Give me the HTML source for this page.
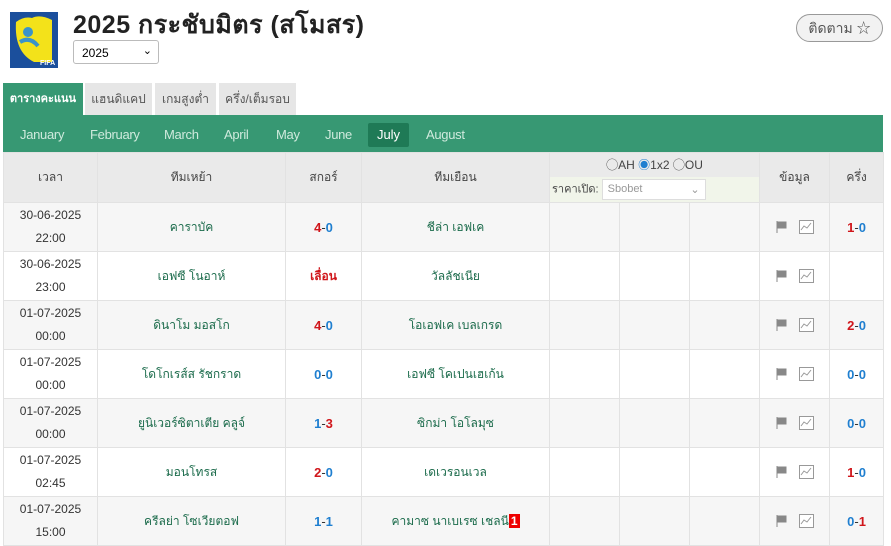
<!DOCTYPE html>
<html><head><meta charset="utf-8"><style>
*{margin:0;padding:0;box-sizing:border-box}
body{width:891px;height:546px;overflow:hidden;background:#fff;font-family:"Liberation Sans","Noto Sans CJK SC",sans-serif;font-size:12px;color:#333;position:relative}
.abs{position:absolute}
h1{position:absolute;left:73px;top:5px;font-size:25px;font-weight:bold;color:#222;letter-spacing:0.5px;font-family:"Liberation Sans","Noto Sans CJK SC",sans-serif}
.sel{left:73px;top:40px;width:86px;height:24px;border:1px solid #bbb;border-radius:3px;padding:5px 8px;font-size:12px;color:#000}
.follow{left:796px;top:14px;width:87px;height:28px;border:1px solid #999;border-radius:14px;background:#f2f2f2;color:#555;font-size:14px;text-align:center;line-height:26px}
.tab{top:83px;height:32px;background:#e6e6e6;color:#555;font-size:12px;text-align:center;line-height:32px}
.bar{left:3px;top:115px;width:880px;height:37px;background:#379873}
.m{top:123px;height:24px;line-height:24px;color:#cfeadd;font-size:13px;position:absolute;letter-spacing:-0.3px}
table{position:absolute;left:3px;top:152px;border-collapse:collapse;width:880px;table-layout:fixed}
td,th{border:1px solid #e2e2e2;text-align:center;font-weight:normal}
th{background:#eaeaea;height:50px;color:#444;font-size:12px}
td{height:49px;font-size:12px;line-height:23px}
tr.g td{background:#f6f6f6}
.t{color:#1b6b4b}
.r{color:#d0161b;font-weight:bold}.b{color:#1f7fd0;font-weight:bold}
.sc{font-size:13px}
.fl{display:inline-block;width:11px;height:12px;vertical-align:middle;margin-right:12px}
.ch{display:inline-block;width:15px;height:14px;vertical-align:middle}
</style></head><body>
<svg class="abs" style="left:10px;top:12px" width="48" height="56" viewBox="0 0 48 56">
<rect width="48" height="56" fill="#1b4f9c"/>
<path d="M6 10 Q4 40 24 50 L42 50 L42 8 Q30 2 22 6 Q14 4 6 10Z" fill="#f3e21a"/>
<circle cx="18" cy="20" r="5" fill="#3a93c9"/><path d="M10 30 Q20 24 28 34" stroke="#3a93c9" stroke-width="4" fill="none"/>
<text x="30" y="53" font-size="7" fill="#fff" font-weight="bold" font-family="Liberation Sans">FIFA</text>
</svg>
<h1>2025 กระชับมิตร (สโมสร)</h1>
<div class="abs sel">2025<span style="position:absolute;right:6px;top:3px;font-size:11px">&#8964;</span></div>
<div class="abs follow">ติดตาม ☆</div>
<div class="abs tab" style="left:3px;width:80px;background:#379873;color:#fff;font-weight:bold;font-size:11px">ตารางคะแนน</div>
<div class="abs tab" style="left:85px;width:67px">แฮนดิแคป</div>
<div class="abs tab" style="left:155px;width:61px">เกมสูงต่ำ</div>
<div class="abs tab" style="left:219px;width:77px">ครึ่ง/เต็มรอบ</div>
<div class="abs bar"></div>
<span class="m" style="left:20px">January</span>
<span class="m" style="left:90px">February</span>
<span class="m" style="left:164px">March</span>
<span class="m" style="left:224px">April</span>
<span class="m" style="left:276px">May</span>
<span class="m" style="left:325px">June</span>
<div class="abs" style="left:368px;top:123px;width:41px;height:24px;background:#1f7a56;border-radius:2px;color:#fff;font-size:13px;text-align:center;line-height:24px">July</div>
<span class="m" style="left:426px">August</span>
<table>
<colgroup><col style="width:94px"><col style="width:188px"><col style="width:76px"><col style="width:188px"><col style="width:70px"><col style="width:70px"><col style="width:70px"><col style="width:70px"><col style="width:54px"></colgroup>
<tr><th>เวลา</th><th>ทีมเหย้า</th><th>สกอร์</th><th>ทีมเยือน</th>
<th colspan="3" style="padding:0;vertical-align:top"><div style="height:24px;line-height:24px;font-size:12px">◯AH <span style="color:#1f7fd0">◉</span>1x2 ◯OU</div><div style="height:25px;background:#f1f5ea;text-align:left;padding:2px 0 0 2px;font-size:11px">ราคาเปิด: <span style="display:inline-block;width:104px;height:21px;border:1px solid #ddd;background:#fff;color:#999;padding:3px 5px;vertical-align:middle">Sbobet<span style="float:right">&#8964;</span></span></div></th>
<th>ข้อมูล</th><th>ครึ่ง</th></tr>
<tr class="g"><td>30-06-2025<br>22:00</td><td class="t">คาราบัค</td><td class="sc"><span class="r">4</span>-<span class="b">0</span></td><td class="t">ชีล่า เอฟเค</td><td></td><td></td><td></td><td><svg class="fl" viewBox="0 0 11 12"><path d="M1 0V12M1 1H10V7H1" fill="#888" stroke="#888"/></svg><svg class="ch" viewBox="0 0 15 14"><rect x="0.5" y="0.5" width="14" height="13" fill="#fff" stroke="#999"/><path d="M2 10L5 6L8 8L12 3" fill="none" stroke="#999"/></svg></td><td class="sc"><span class="r">1</span>-<span class="b">0</span></td></tr>
<tr><td>30-06-2025<br>23:00</td><td class="t">เอฟซี โนอาห์</td><td class="r">เลื่อน</td><td class="t">วัลลัชเนีย</td><td></td><td></td><td></td><td><svg class="fl" viewBox="0 0 11 12"><path d="M1 0V12M1 1H10V7H1" fill="#888" stroke="#888"/></svg><svg class="ch" viewBox="0 0 15 14"><rect x="0.5" y="0.5" width="14" height="13" fill="#fff" stroke="#999"/><path d="M2 10L5 6L8 8L12 3" fill="none" stroke="#999"/></svg></td><td></td></tr>
<tr class="g"><td>01-07-2025<br>00:00</td><td class="t">ดินาโม มอสโก</td><td class="sc"><span class="r">4</span>-<span class="b">0</span></td><td class="t">โอเอฟเค เบลเกรด</td><td></td><td></td><td></td><td><svg class="fl" viewBox="0 0 11 12"><path d="M1 0V12M1 1H10V7H1" fill="#888" stroke="#888"/></svg><svg class="ch" viewBox="0 0 15 14"><rect x="0.5" y="0.5" width="14" height="13" fill="#fff" stroke="#999"/><path d="M2 10L5 6L8 8L12 3" fill="none" stroke="#999"/></svg></td><td class="sc"><span class="r">2</span>-<span class="b">0</span></td></tr>
<tr><td>01-07-2025<br>00:00</td><td class="t">โดโกเรส์ส รัชกราด</td><td class="sc"><span class="b">0</span>-<span class="b">0</span></td><td class="t">เอฟซี โคเปนเฮเก้น</td><td></td><td></td><td></td><td><svg class="fl" viewBox="0 0 11 12"><path d="M1 0V12M1 1H10V7H1" fill="#888" stroke="#888"/></svg><svg class="ch" viewBox="0 0 15 14"><rect x="0.5" y="0.5" width="14" height="13" fill="#fff" stroke="#999"/><path d="M2 10L5 6L8 8L12 3" fill="none" stroke="#999"/></svg></td><td class="sc"><span class="b">0</span>-<span class="b">0</span></td></tr>
<tr class="g"><td>01-07-2025<br>00:00</td><td class="t">ยูนิเวอร์ซิตาเตีย คลูจ์</td><td class="sc"><span class="b">1</span>-<span class="r">3</span></td><td class="t">ซิกม่า โอโลมุซ</td><td></td><td></td><td></td><td><svg class="fl" viewBox="0 0 11 12"><path d="M1 0V12M1 1H10V7H1" fill="#888" stroke="#888"/></svg><svg class="ch" viewBox="0 0 15 14"><rect x="0.5" y="0.5" width="14" height="13" fill="#fff" stroke="#999"/><path d="M2 10L5 6L8 8L12 3" fill="none" stroke="#999"/></svg></td><td class="sc"><span class="b">0</span>-<span class="b">0</span></td></tr>
<tr><td>01-07-2025<br>02:45</td><td class="t">มอนโทรส</td><td class="sc"><span class="r">2</span>-<span class="b">0</span></td><td class="t">เดเวรอนเวล</td><td></td><td></td><td></td><td><svg class="fl" viewBox="0 0 11 12"><path d="M1 0V12M1 1H10V7H1" fill="#888" stroke="#888"/></svg><svg class="ch" viewBox="0 0 15 14"><rect x="0.5" y="0.5" width="14" height="13" fill="#fff" stroke="#999"/><path d="M2 10L5 6L8 8L12 3" fill="none" stroke="#999"/></svg></td><td class="sc"><span class="r">1</span>-<span class="b">0</span></td></tr>
<tr class="g"><td>01-07-2025<br>15:00</td><td class="t">ครีลย่า โซเวียตอฟ</td><td class="sc"><span class="b">1</span>-<span class="b">1</span></td><td class="t">คามาซ นาเบเรซ เชลนี<span style="background:#e00;color:#fff;font-weight:bold;padding:0 2px">1</span></td><td></td><td></td><td></td><td><svg class="fl" viewBox="0 0 11 12"><path d="M1 0V12M1 1H10V7H1" fill="#888" stroke="#888"/></svg><svg class="ch" viewBox="0 0 15 14"><rect x="0.5" y="0.5" width="14" height="13" fill="#fff" stroke="#999"/><path d="M2 10L5 6L8 8L12 3" fill="none" stroke="#999"/></svg></td><td class="sc"><span class="b">0</span>-<span class="r">1</span></td></tr>
</table>
</body></html>
